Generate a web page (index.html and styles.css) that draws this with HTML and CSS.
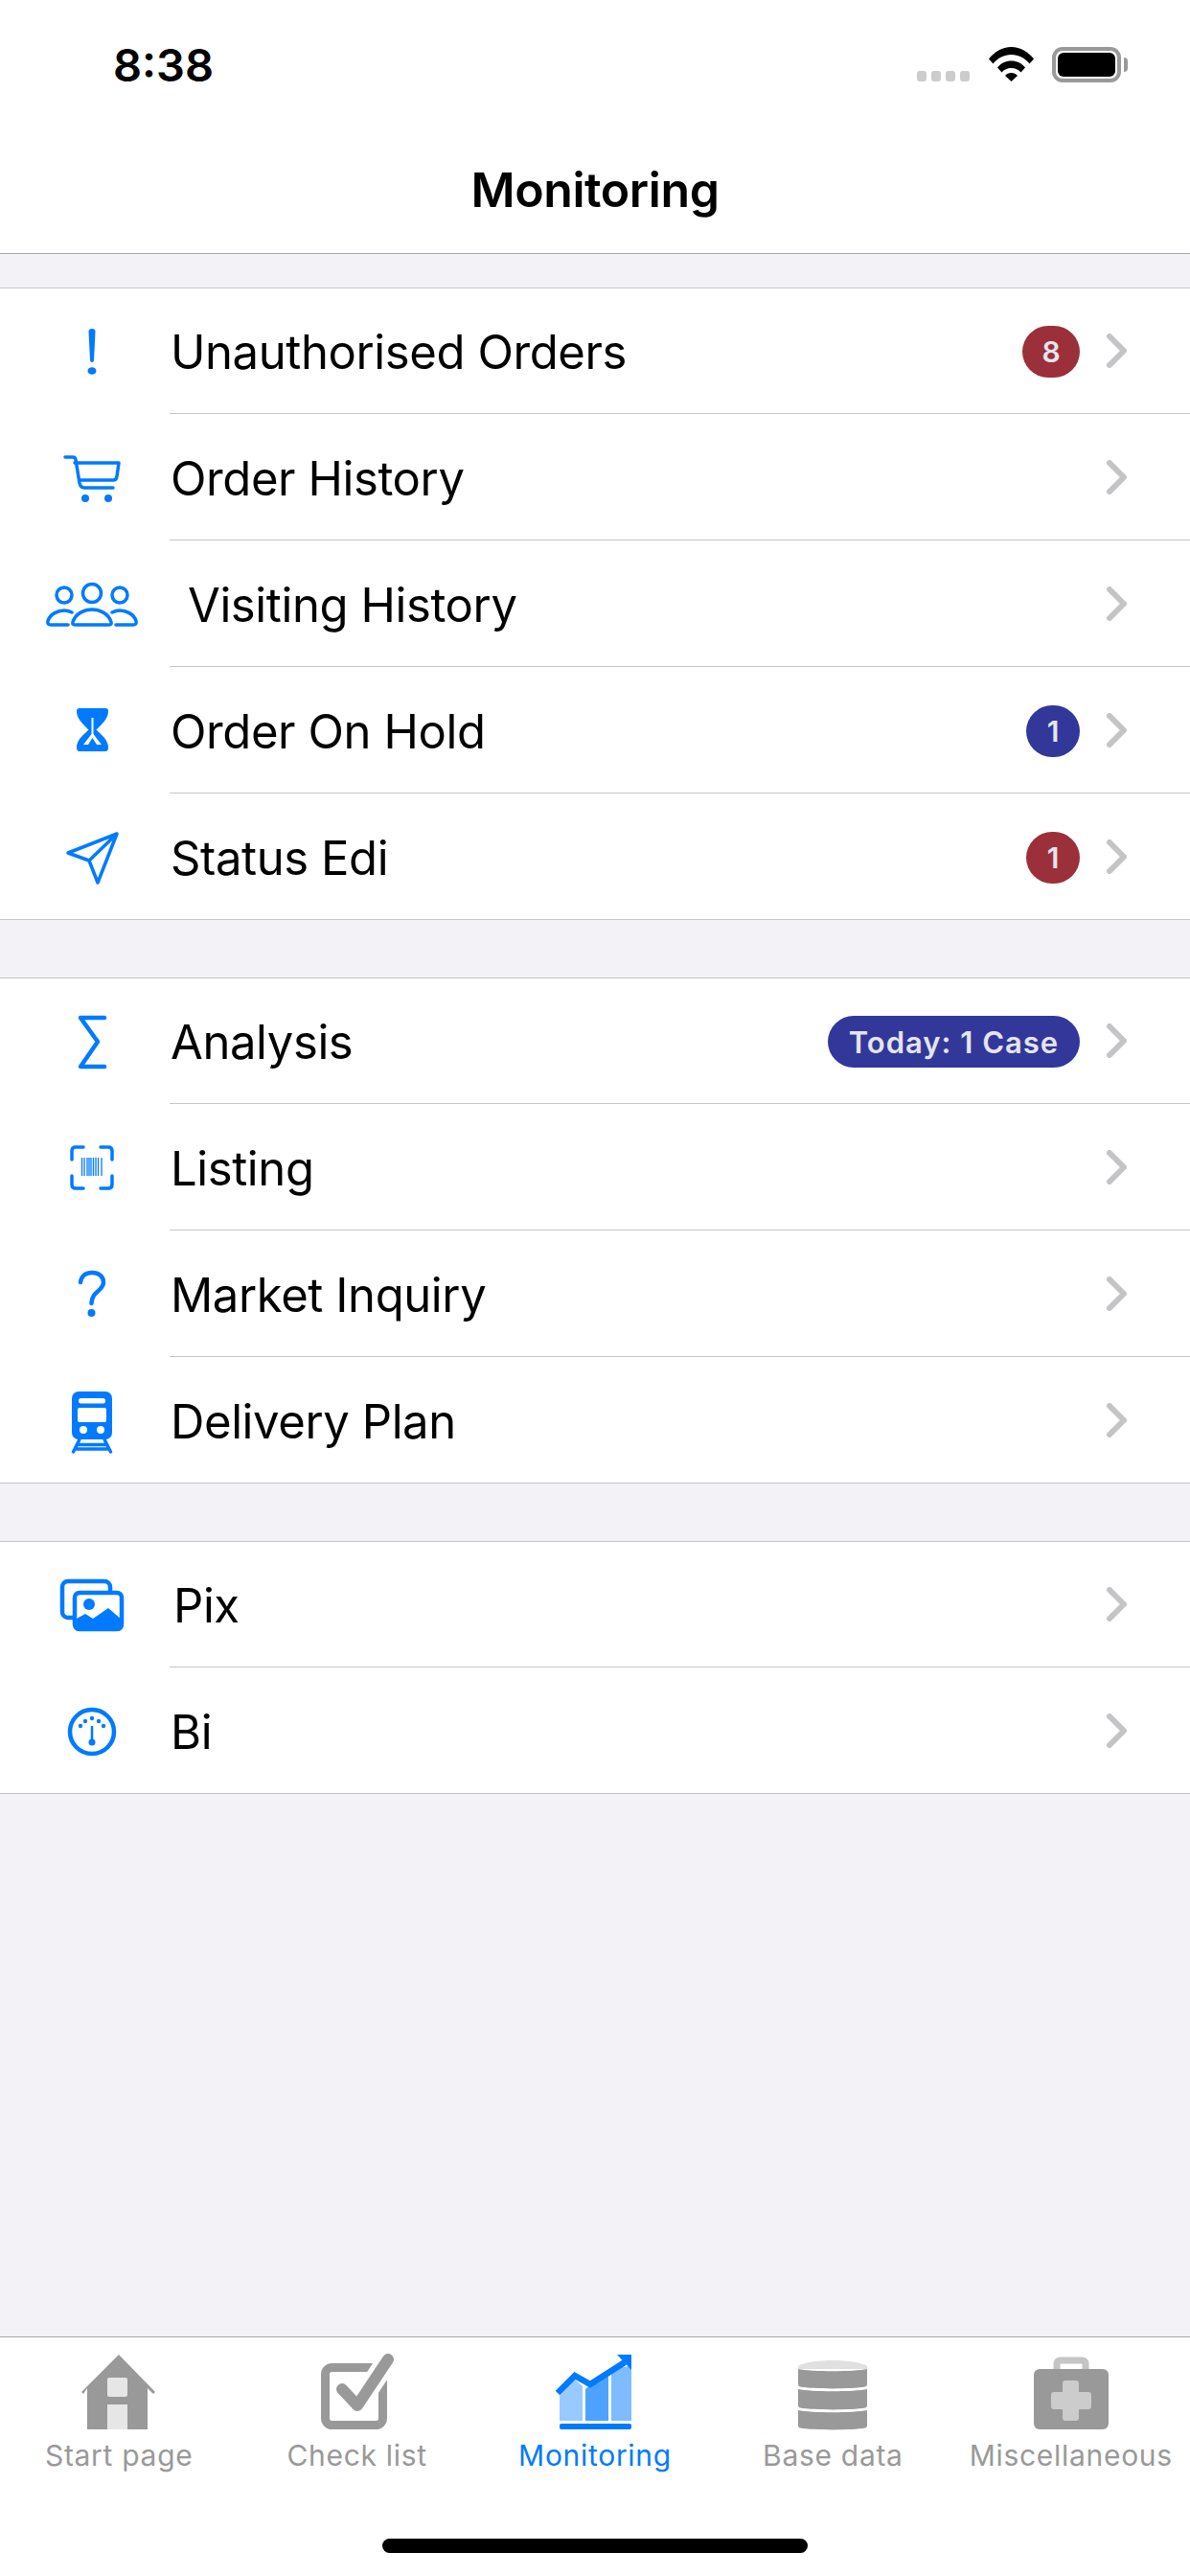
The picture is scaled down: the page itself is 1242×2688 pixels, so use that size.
FILE: index.html
```html
<!DOCTYPE html>
<html lang="en">
<head>
<meta charset="utf-8">
<title>Monitoring</title>
<link rel="stylesheet" href="styles.css">
</head>
<body>
<div class="app">
  <header class="top">
    <div class="status">
      <span class="time">8:38</span>
      <div class="indicators">
        <div class="signal"><i></i><i></i><i></i><i></i></div>
        <svg class="wifi" viewBox="0 0 47 36"><path d="M0 12.5C6 5 14 0 23.5 0S41 5 47 12.5L42.5 17.5C37.500 11.500 31 8 23.5 8S9.500 11.500 4.500 17.500Z"/><path d="M9 21.500C12.500 17 18 14.500 23.500 14.500S34.500 17 38 21.500L33.500 26.500C31 23.500 27.500 22 23.500 22S16 23.500 13.500 26.500Z"/><path d="M17 30C18.500 28 21 27 23.500 27S28.500 28 30 30L23.500 36Z"/></svg>
        <div class="battery"><span class="battery-level"></span></div>
        <span class="battery-nub"></span>
      </div>
    </div>
    <h1 class="title">Monitoring</h1>
  </header>

  <main class="content">
    <section class="group">
      <div class="row">
        <div class="slot"><svg class="ic" viewBox="0 0 96 64"><path class="f" d="M44.500 11Q44.500 8 48 8T51.500 11L50 41Q49.800 43 48 43T46 41Z"/><ellipse class="f" cx="48" cy="52" rx="4.500" ry="3.800"/></svg></div>
        <div class="main"><span class="label">Unauthorised Orders</span><span class="badge red wide">8</span><svg class="chev" viewBox="0 0 21 36"><path d="M3 3L18 18L3 33"/></svg></div>
      </div>
      <div class="row">
        <div class="slot"><svg class="ic" viewBox="0 0 96 64"><path class="s" d="M20 11H28Q30.500 11 31 13.500L35 38Q36 43 40 43H70"/><path class="s" d="M30 17H76L74 31Q73.500 35 70 35H35"/><circle class="f" cx="41" cy="54" r="4"/><circle class="f" cx="65" cy="54" r="4"/></svg></div>
        <div class="main"><span class="label">Order History</span><svg class="chev" viewBox="0 0 21 36"><path d="M3 3L18 18L3 33"/></svg></div>
      </div>
      <div class="row">
        <div class="slot"><svg class="ic" viewBox="0 0 96 64"><circle class="s" cx="48" cy="21" r="9.500"/><circle class="s" cx="19" cy="23" r="8"/><circle class="s" cx="77" cy="23" r="8"/><path class="s" d="M31 54H65Q69 54 68 51C65 42 56 38 48 38C40 38 31 42 28 51Q27 54 31 54Z"/><path class="s" d="M23 54H5Q1 54 2 50C4 43 12 39 19 39C22 39 24 39.500 27 41"/><path class="s" d="M73 54H91Q95 54 94 50C92 43 84 39 77 39C74 39 72 39.500 69 41"/></svg></div>
        <div class="main"><span class="label indent">Visiting History</span><svg class="chev" viewBox="0 0 21 36"><path d="M3 3L18 18L3 33"/></svg></div>
      </div>
      <div class="row">
        <div class="slot"><svg class="ic" viewBox="0 0 96 64"><path class="f" d="M35 9H62Q65 9 65 12C65 20 58 26 52.500 31.500C58 37 65 42 65 50Q65 54 62 54H35Q32 54 32 50C32 42 39 37 44.500 31.500C39 26 32 20 32 12Q32 9 35 9Z"/><path class="w" d="M47.500 19H49.500V36L58 47H39L47.500 36Z"/><path class="f" d="M48.500 40L53 47H44Z"/></svg></div>
        <div class="main"><span class="label">Order On Hold</span><span class="badge blue">1</span><svg class="chev" viewBox="0 0 21 36"><path d="M3 3L18 18L3 33"/></svg></div>
      </div>
      <div class="row">
        <div class="slot"><svg class="ic" viewBox="0 0 96 64"><path class="s" d="M74 8L23 28L45 36L54 59ZM74 8L45 36"/></svg></div>
        <div class="main"><span class="label">Status Edi</span><span class="badge red">1</span><svg class="chev" viewBox="0 0 21 36"><path d="M3 3L18 18L3 33"/></svg></div>
      </div>
    </section>

    <section class="group">
      <div class="row">
        <div class="slot"><svg class="ic" viewBox="0 0 96 64"><path class="s thick" d="M61 7H36L54 32L36 58H61"/></svg></div>
        <div class="main"><span class="label">Analysis</span><span class="badge blue pill">Today: 1 Case</span><svg class="chev" viewBox="0 0 21 36"><path d="M3 3L18 18L3 33"/></svg></div>
      </div>
      <div class="row">
        <div class="slot"><svg class="ic" viewBox="0 0 96 64"><path class="s" d="M27 24V15Q27 11 31 11H39M57 11H65Q69 11 69 15V24M69 41V50Q69 54 65 54H57M39 54H31Q27 54 27 50V41"/><path class="b" d="M37.500 22V41M40 22V41M43 22V41M45 22V41M47 22V41M49.500 22V41M52 22V41M54.500 22V41M58 22V41"/></svg></div>
        <div class="main"><span class="label">Listing</span><svg class="chev" viewBox="0 0 21 36"><path d="M3 3L18 18L3 33"/></svg></div>
      </div>
      <div class="row">
        <div class="slot"><svg class="ic" viewBox="0 0 96 64"><path class="s thick" d="M36 20C37 13 42 10 48 10C55 10 60 14 60 20C60 29 48 29 47.500 42"/><circle class="f" cx="47.500" cy="52" r="4"/></svg></div>
        <div class="main"><span class="label">Market Inquiry</span><svg class="chev" viewBox="0 0 21 36"><path d="M3 3L18 18L3 33"/></svg></div>
      </div>
      <div class="row">
        <div class="slot"><svg class="ic" viewBox="0 0 96 64"><rect class="f" x="27" y="2" width="42" height="50" rx="7"/><rect class="w" x="34" y="9" width="28" height="5.500" rx="2.500"/><rect class="w" x="33" y="19" width="30" height="15" rx="2"/><circle class="w" cx="39" cy="42" r="4"/><circle class="w" cx="57" cy="42" r="4"/><path class="s" d="M35 52L28.500 65M61 52L67.500 65M33 57.500H63M30.500 62H65.500"/></svg></div>
        <div class="main"><span class="label">Delivery Plan</span><svg class="chev" viewBox="0 0 21 36"><path d="M3 3L18 18L3 33"/></svg></div>
      </div>
    </section>

    <section class="group">
      <div class="row">
        <div class="slot"><svg class="ic" viewBox="0 0 96 64"><rect class="s thick" x="17" y="7" width="50" height="38" rx="6"/><rect class="s thick wfill" x="30" y="19" width="49" height="38" rx="5"/><circle class="f" cx="45" cy="31" r="6"/><path class="f" d="M30 47L41 41L49 46L65 35L79 47V55Q79 59 75 59H34Q30 59 30 55Z"/></svg></div>
        <div class="main"><span class="label pix">Pix</span><svg class="chev" viewBox="0 0 21 36"><path d="M3 3L18 18L3 33"/></svg></div>
      </div>
      <div class="row">
        <div class="slot"><svg class="ic" viewBox="0 0 96 64"><circle class="s thick" cx="48" cy="33" r="23"/><path class="s thin" d="M48 28V43"/><circle class="f" cx="48" cy="44" r="3.500"/><circle class="f" cx="48" cy="19" r="2.200"/><circle class="f" cx="55" cy="22" r="2.200"/><circle class="f" cx="41" cy="22" r="2.200"/><circle class="f" cx="60" cy="27" r="2.200"/><circle class="f" cx="36" cy="27" r="2.200"/></svg></div>
        <div class="main"><span class="label">Bi</span><svg class="chev" viewBox="0 0 21 36"><path d="M3 3L18 18L3 33"/></svg></div>
      </div>
    </section>
  </main>

  <footer class="tabbar">
    <nav class="tabs">
      <div class="tab">
        <svg class="tab-ic" viewBox="0 0 100 80"><path class="g" d="M50 1L88 40L86 42L80 36V79H17V36L13 42L11 40Z"/><rect class="lg" x="38" y="25" width="21" height="20" rx="2"/><path class="lg" d="M38 53H59V79H38Z"/></svg>
        <span class="tab-label">Start page</span>
      </div>
      <div class="tab">
        <svg class="tab-ic" viewBox="0 0 100 80"><rect class="box" x="16.500" y="14.500" width="60" height="60" rx="7"/><path class="tick-gap" d="M34 37L50 54L82 6"/><path class="tick" d="M34 37L50 54L82 6"/></svg>
        <span class="tab-label">Check list</span>
      </div>
      <div class="tab active">
        <svg class="tab-ic" viewBox="0 0 100 80"><path class="bar1" d="M13 44L29 27L37 34V70H13Z"/><path class="bar2" d="M40 37L64 17V70H40Z"/><path class="bar3" d="M67 15L88 13V70H67Z"/><rect class="f" x="13" y="73" width="75" height="6" rx="2"/><path class="trend" d="M11 41L29 23L45 32L81 9"/><path class="f" d="M73 1H88V17Z"/></svg>
        <span class="tab-label">Monitoring</span>
      </div>
      <div class="tab">
        <svg class="tab-ic" viewBox="0 0 100 80"><path class="lg2" d="M14 13C20 9 35 7 50 7S80 9 86 13V16H14Z"/><path class="g" d="M14 16C28 19 72 19 86 16V32Q86 34 84 34.500C70 37 30 37 16 34.500Q14 34 14 32Z"/><path class="g" d="M14 37C28 40 72 40 86 37V54Q86 56 84 56.500C70 59 30 59 16 56.500Q14 56 14 54Z"/><path class="g" d="M14 59C28 62 72 62 86 59V75Q86 77 84 77.500C70 80 30 80 16 77.500Q14 77 14 75Z"/></svg>
        <span class="tab-label">Base data</span>
      </div>
      <div class="tab">
        <svg class="tab-ic" viewBox="0 0 100 80"><path class="handle" d="M35 17V11Q35 7 39 7H61Q65 7 65 11V17"/><rect class="g" x="11" y="16" width="78" height="63" rx="6"/><path class="lg3" d="M44 28H55Q58 28 58 31V40H68Q71 40 71 43V55Q71 58 68 58H58V67Q58 70 55 70H44Q41 70 41 67V58H32Q29 58 29 55V43Q29 40 32 40H41V31Q41 28 44 28Z"/></svg>
        <span class="tab-label">Miscellaneous</span>
      </div>
    </nav>
    <div class="home-indicator"></div>
  </footer>
</div>
</body>
</html>
```
FILE: styles.css
```css
* { box-sizing: border-box; margin: 0; padding: 0; }
html, body { width: 1242px; height: 2688px; overflow: hidden; background: #f2f2f7; }
body { font-family: Inter, "Liberation Sans", sans-serif; color: #000; }
.app { width: 1242px; height: 2688px; display: flex; flex-direction: column; }

/* header */
.top { background: #fff; height: 265px; border-bottom: 1px solid #a9a9ab; display: flex; flex-direction: column; }
.status { height: 150px; display: flex; justify-content: space-between; align-items: flex-start; padding: 43px 65px 0 118px; }
.time { font-size: 47px; font-weight: 600; line-height: 50px; }
.indicators { display: flex; align-items: flex-start; padding-top: 6px; }
.signal { display: flex; gap: 5px; margin-top: 25px; margin-right: 20px; }
.signal i { display: block; width: 10px; height: 11px; border-radius: 3px; background: #ccc; }
.wifi { width: 47px; height: 36px; fill: #000; margin-right: 19px; }
.battery { width: 72px; height: 37px; border: 4px solid #999; border-radius: 11px; padding: 2px; }
.battery-level { display: block; width: 100%; height: 100%; background: #000; border-radius: 6px; }
.battery-nub { width: 4px; height: 15px; margin-top: 11px; margin-left: 3px; background: #999; border-radius: 0 4px 4px 0; }
.title { text-align: center; font-size: 50px; font-weight: 600; line-height: 60px; margin-top: 18px; letter-spacing: -0.4px; }

/* list */
.content { flex: 1; display: flex; flex-direction: column; gap: 60px; padding-top: 35px; }
.group { background: #fff; border-top: 1px solid #c6c6c8; border-bottom: 1px solid #c6c6c8; }
.row { height: 132px; display: flex; }
.row:first-child, .row:last-child { height: 131px; }
.slot { width: 177px; padding-left: 48px; display: flex; align-items: center; flex: none; }
.ic { width: 96px; height: 64px; overflow: visible; display: block; }
.f { fill: #007aff; }
.s { fill: none; stroke: #007aff; stroke-width: 3.5; stroke-linecap: round; stroke-linejoin: round; }
.thick { stroke-width: 4.5; }
.thin { stroke-width: 2.5; }
.wfill { fill: #fff; }
.w { fill: #fff; }
.b { fill: none; stroke: #007aff; stroke-width: 1.3; }
.main { flex: 1; min-width: 0; display: flex; align-items: center; border-bottom: 1px solid #c6c6c8; padding-right: 66px; }
.row:last-child .main { border-bottom: 0; }
.label { flex: 1; font-size: 49px; letter-spacing: -0.4px; line-height: 60px; padding-left: 1px; padding-top: 4px; }
.indent { padding-left: 19px; }
.pix { padding-left: 4px; }
.badge { height: 54px; min-width: 56px; border-radius: 27px; color: #e4e4ee; display: flex; align-items: center; justify-content: center; font-size: 30px; font-weight: 600; margin-right: 28px; margin-top: 2px; }
.wide { min-width: 60px; }
.pill { width: 263px; font-size: 31px; letter-spacing: 1px; }
.red { background: #9b303a; }
.blue { background: #313899; }
.chev { width: 21px; height: 36px; fill: none; stroke: #c4c4c7; stroke-width: 6; stroke-linecap: round; stroke-linejoin: round; flex: none; }

/* tab bar */
.tabbar { height: 250px; background: #fff; border-top: 1px solid #a9a9ab; display: flex; flex-direction: column; align-items: center; }
.tabs { width: 100%; display: grid; grid-template-columns: repeat(5, 1fr); padding-top: 17px; }
.tab { display: flex; flex-direction: column; align-items: center; color: #999; }
.tab.active { color: #007aff; }
.tab-ic { width: 100px; height: 80px; display: block; }
.tab-label { font-size: 30px; line-height: 36px; margin-top: 8px; letter-spacing: 0.7px; white-space: nowrap; }
.g { fill: #999; }
.lg { fill: #e6e6e6; }
.lg2 { fill: #e0e0e0; }
.lg3 { fill: #ccc; }
.box { fill: none; stroke: #999; stroke-width: 9; }
.tick-gap { fill: none; stroke: #fff; stroke-width: 22; stroke-linecap: round; stroke-linejoin: round; }
.tick { fill: none; stroke: #999; stroke-width: 12; stroke-linecap: round; stroke-linejoin: round; }
.bar1 { fill: #99caff; }
.bar2 { fill: #4da2ff; }
.bar3 { fill: #7fbcff; }
.trend { fill: none; stroke: #007aff; stroke-width: 6.500; }
.handle { fill: none; stroke: #c4c4c4; stroke-width: 7; }
.home-indicator { width: 444px; height: 15px; border-radius: 8px; background: #000; margin-top: 69px; }
```
